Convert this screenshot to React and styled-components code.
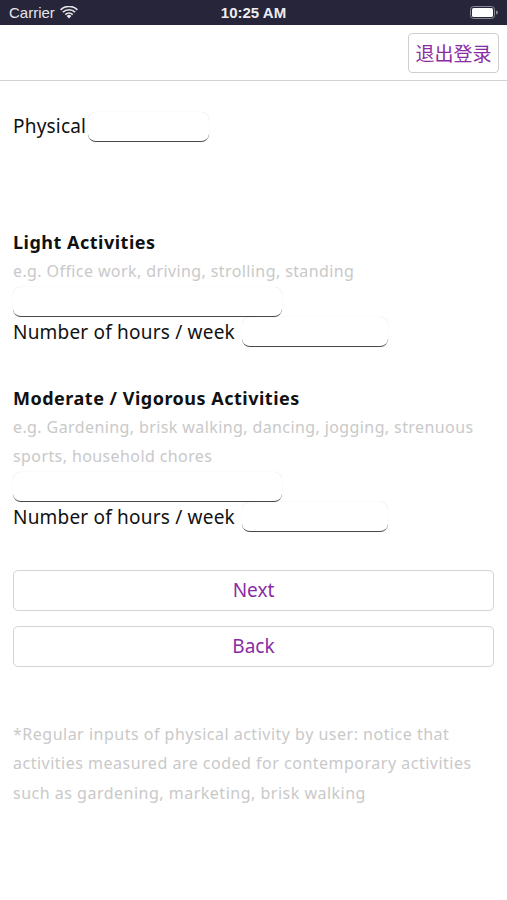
import styled, { createGlobalStyle } from 'styled-components';

const GlobalStyle = createGlobalStyle`
	body {
		margin: 0;
		background: #fff;
		font-family: 'Noto Sans', 'Liberation Sans', 'Noto Sans CJK SC', sans-serif;
	}
`;

const Page = styled.div`
	width: 507px;
	height: 900px;
	background: #fff;
	overflow: hidden;
`;

const StatusBar = styled.div`
	height: 25px;
	background: #26253a;
	color: #fff;
	display: grid;
	grid-template-columns: 1fr auto 1fr;
	align-items: center;
	padding: 0 9px;
	font-size: 15px;
	font-family: 'Liberation Sans', Arial, sans-serif;
`;

const StatusLeft = styled.div`
	display: flex;
	align-items: center;
	gap: 5px;
	color: #e6e6ea;
`;

const StatusTime = styled.div`
	font-weight: bold;
	color: #ededf0;
`;

const StatusRight = styled.div`
	display: flex;
	justify-content: flex-end;
`;

const Header = styled.div`
	height: 55px;
	border-bottom: 1px solid #d2d2d2;
	display: flex;
	justify-content: flex-end;
	align-items: center;
	padding-right: 8px;
`;

const LogoutButton = styled.button`
	width: 91px;
	height: 40px;
	border: 1px solid #cfcfcf;
	border-radius: 4px;
	background: #fff;
	color: #8a2ca4;
	font-size: 19px;
	font-family: 'Noto Sans CJK SC', sans-serif;
	padding: 0;
`;

const Content = styled.div`
	padding: 0 13px;
`;

const Row = styled.div`
	display: flex;
	align-items: flex-end;
	margin-top: ${p => p.$top || 0}px;
`;

const Label = styled.span`
	font-size: 19px;
	color: #111;
	line-height: 22px;
	letter-spacing: 0.2px;
	padding-bottom: ${p => p.$lift || 0}px;
	margin-right: ${p => p.$gap || 0}px;
`;

const Field = styled.div`
	width: ${p => p.$width}px;
	height: 30px;
	border-radius: 8px;
	border-bottom: 1.5px solid #4a4a4a;
	box-shadow: 0 0 1px rgba(0, 0, 0, 0.18);
	box-sizing: border-box;
	margin-bottom: ${p => p.$drop || 0}px;
`;

const Heading = styled.div`
	font-size: 18px;
	font-weight: bold;
	color: #111;
	margin-top: ${p => p.$top}px;
	line-height: 22px;
	letter-spacing: 0.5px;
`;

const Hint = styled.div`
	font-size: 16px;
	color: #c9c9c9;
	line-height: 29.5px;
	letter-spacing: 0.4px;
	margin-top: 4px;
`;

const Button = styled.button`
	display: block;
	width: 100%;
	height: 41px;
	border: 1.5px solid #d3d3d3;
	border-radius: 5px;
	background: #fff;
	color: #8a2ca4;
	font-size: 19px;
	font-family: 'Noto Sans', sans-serif;
	margin-top: ${p => p.$top}px;
`;

const Note = styled.div`
	font-size: 16px;
	color: #c9c9c9;
	line-height: 29.5px;
	letter-spacing: 0.5px;
	margin-top: 53px;
`;

function Wifi() {
	return (
		<svg width='18' height='13' viewBox='0 0 18 13'>
			<path d='M9 12.5 L6.6 9.9 A3.4 3.4 0 0 1 11.4 9.9 Z' fill='#e6e6ea' />
			<path d='M4.7 8 A6.2 6.2 0 0 1 13.3 8 L12.1 9.2 A4.5 4.5 0 0 0 5.9 9.2 Z' fill='#e6e6ea' />
			<path d='M2.3 5.6 A9.6 9.6 0 0 1 15.7 5.6 L14.5 6.8 A7.9 7.9 0 0 0 3.5 6.8 Z' fill='#e6e6ea' />
			<path d='M0 3.2 A13 13 0 0 1 18 3.2 L16.8 4.4 A11.3 11.3 0 0 0 1.2 4.4 Z' fill='#e6e6ea' />
		</svg>
	);
}

function Battery() {
	return (
		<svg width='28' height='13' viewBox='0 0 28 13'>
			<rect x='0.5' y='0.5' width='24' height='12' rx='3' fill='none' stroke='#8a8a96' />
			<rect x='2' y='2' width='21' height='9' rx='1.6' fill='#fff' />
			<path d='M26 4.5 A2 2 0 0 1 26 8.5 Z' fill='#8a8a96' />
		</svg>
	);
}

export default function App() {
	return (
		<Page>
			<GlobalStyle />
			<StatusBar>
				<StatusLeft>
					Carrier <Wifi />
				</StatusLeft>
				<StatusTime>10:25 AM</StatusTime>
				<StatusRight>
					<Battery />
				</StatusRight>
			</StatusBar>
			<Header>
				<LogoutButton>退出登录</LogoutButton>
			</Header>
			<Content>
				<Row $top={31}>
					<Label $lift={5} $gap={2}>Physical</Label>
					<Field $width={121} />
				</Row>

				<Heading $top={89}>Light Activities</Heading>
				<Hint>e.g. Office work, driving, strolling, standing</Hint>
				<Field $width={269} />
				<Row>
					<Label $gap={7}>Number of hours / week</Label>
					<Field $width={146} $drop={-4} />
				</Row>

				<Heading $top={44}>Moderate / Vigorous Activities</Heading>
				<Hint>
					e.g. Gardening, brisk walking, dancing, jogging, strenuous
					<br />
					sports, household chores
				</Hint>
				<Field $width={269} />
				<Row>
					<Label $gap={7}>Number of hours / week</Label>
					<Field $width={146} $drop={-4} />
				</Row>

				<Button $top={42}>Next</Button>
				<Button $top={15}>Back</Button>

				<Note>
					*Regular inputs of physical activity by user: notice that
					<br />
					activities measured are coded for contemporary activities
					<br />
					such as gardening, marketing, brisk walking
				</Note>
			</Content>
		</Page>
	);
}
